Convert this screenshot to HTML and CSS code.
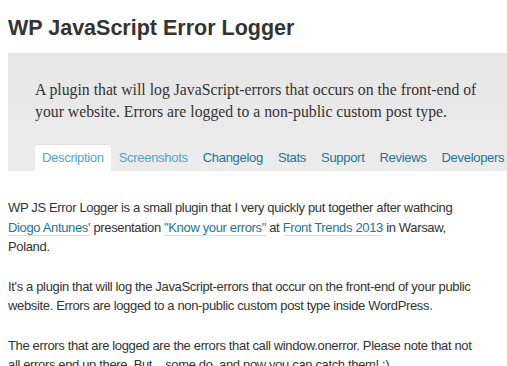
FILE: index.html
```html
<!DOCTYPE html>
<html lang="en">
<head>
  <meta charset="UTF-8">
  <title>WP JavaScript Error Logger</title>
  <link rel="stylesheet" href="styles.css">
</head>
<body>
  <h1>WP JavaScript Error Logger</h1>

  <div class="plugin-header">
    <p class="short-description">A plugin that will log JavaScript-errors that occurs on the front-end of your website. Errors are logged to a non-public custom post type.</p>
    <ul class="tabs">
      <li class="current"><a href="#description">Description</a></li>
      <li class="visited"><a href="#screenshots">Screenshots</a></li>
      <li><a href="#changelog">Changelog</a></li>
      <li><a href="#stats">Stats</a></li>
      <li><a href="#support">Support</a></li>
      <li><a href="#reviews">Reviews</a></li>
      <li><a href="#developers">Developers</a></li>
    </ul>
  </div>

  <div class="content">
    <p>WP JS Error Logger is a small plugin that I very quickly put together after wathcing <a href="#">Diogo Antunes'</a> presentation <a href="#">"Know your errors"</a> at <a href="#">Front Trends 2013</a> in Warsaw, Poland.</p>
    <p>It's a plugin that will log the JavaScript-errors that occur on the front-end of your public website. Errors are logged to a non-public custom post type inside WordPress.</p>
    <p>The errors that are logged are the errors that call window.onerror. Please note that not all errors end up there. But... some do, and now you can catch them! :)</p>
  </div>
</body>
</html>
```

FILE: styles.css
```css
body {
  font-family: "Liberation Sans", Arial, sans-serif;
  color: #333;
  margin: 0;
  padding: 0 0 0 8px;
  overflow: hidden;
}
h1 {
  font-size: 21.5px;
  font-weight: bold;
  color: #333;
  margin: 0;
  padding-top: 16px;
  line-height: 25px;
  height: 37px;
}
.plugin-header {
  background: linear-gradient(#e6e6e6, #ececec);
  padding: 26px 0 0 27px;
}
.short-description {
  font-family: "Liberation Serif", Georgia, serif;
  font-size: 15.75px;
  line-height: 22px;
  color: #333;
  width: 470px;
  margin: 0 0 22px;
}
.tabs {
  list-style: none;
  margin: 0;
  padding: 0;
  display: flex;
  gap: 1px;
  font-size: 13px;
  letter-spacing: -0.3px;
}
.tabs li a {
  display: block;
  padding: 0 7px;
  height: 26px;
  line-height: 26px;
  color: #21759b;
  text-decoration: none;
  white-space: nowrap;
}
.tabs li.visited a {
  color: #4ca6cf;
}
.tabs li.current a {
  background: #fff;
  color: #4fa6d6;
  border-radius: 3px 3px 0 0;
  box-shadow: 0 -1px 1px rgba(0, 0, 0, 0.05);
}
.content {
  width: 468px;
  padding-top: 27px;
  font-size: 13px;
  line-height: 19.5px;
  letter-spacing: -0.35px;
}
.content p {
  margin: 0 0 20px;
}
.content a {
  color: #21759b;
  text-decoration: none;
  border-bottom: 1px solid #ddd;
}
```
